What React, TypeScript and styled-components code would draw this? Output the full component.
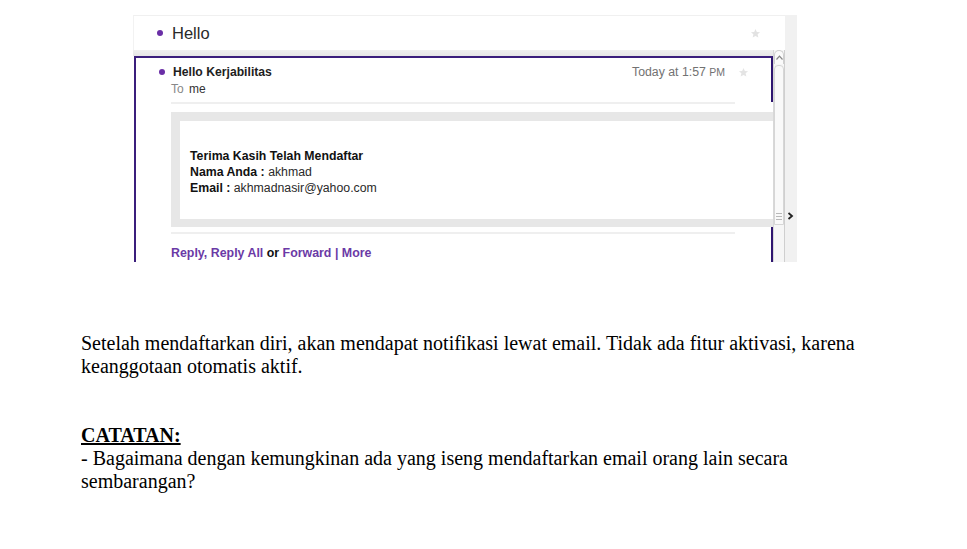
import React from "react";
import styled, { createGlobalStyle } from "styled-components";

const Global = createGlobalStyle`
  html, body { margin: 0; padding: 0; background: #fff; }
  body { font-family: "Liberation Sans", Arial, sans-serif; }
`;

const Page = styled.div`
  width: 967px;
  height: 549px;
  padding-top: 15px;
  box-sizing: border-box;
  overflow: hidden;
`;

const Shot = styled.div`
  margin-left: 133px;
  width: 664px;
  height: 247px;
  display: flex;
  overflow: hidden;
`;

const LeftPane = styled.div`
  width: 652px;
  display: flex;
  flex-direction: column;
`;

const Header = styled.div`
  height: 35px;
  flex: none;
  box-sizing: border-box;
  border-top: 1px solid #f0f0f0;
  border-left: 1px solid #f2f2f2;
  background: #fff;
  display: flex;
  align-items: center;
  padding: 0 24px 0 23px;
`;

const Dot = styled.span<{ $size: number }>`
  width: ${(p) => p.$size}px;
  height: ${(p) => p.$size}px;
  border-radius: 50%;
  background: #6a2ea6;
  flex: none;
`;

const HeaderTitle = styled.span`
  margin-left: 9px;
  font-size: 16.5px;
  color: #2a2a2a;
`;

const Spacer = styled.span`
  flex: 1;
`;

const Row = styled.div`
  flex: 1;
  display: flex;
  min-height: 0;
`;

const ContentCol = styled.div`
  width: 640px;
  display: flex;
  flex-direction: column;
`;

const Band = styled.div`
  height: 6px;
  flex: none;
  background: linear-gradient(#efefef, #e6e6e6);
`;

const Card = styled.div`
  flex: 1;
  margin-left: 1px;
  border: 2px solid #3b1e7c;
  border-bottom: none;
  border-right-color: #2f1670;
  padding: 6px 22px 0 0;
  background: #fff;
`;

const TitleRow = styled.div`
  height: 16px;
  display: flex;
  align-items: center;
`;

const CardDot = styled(Dot)`
  margin-left: 23px;
`;

const Title = styled.span`
  margin-left: 8px;
  font-size: 12.2px;
  font-weight: bold;
  color: #1e1e1e;
`;

const Time = styled.span`
  font-size: 12.3px;
  color: #727272;
  small {
    font-size: 10.5px;
  }
`;

const StarWrap = styled.span<{ $gap: number }>`
  margin-left: ${(p) => p.$gap}px;
  display: flex;
  align-items: center;
`;

const ToRow = styled.div`
  margin: 1px 0 0 35px;
  height: 16px;
  line-height: 16px;
  font-size: 12px;
  color: #888;
  b {
    font-weight: normal;
    color: #333;
    margin-left: 2px;
  }
`;

const MessageArea = styled.div`
  margin: 5px -24px 0 35px;
  background: #fff;
`;

const Rule = styled.div<{ $right: number }>`
  height: 2px;
  background: #efefef;
  margin-right: ${(p) => p.$right}px;
`;

const GrayBox = styled.div`
  margin-top: 8px;
  border: 9px solid #e7e7e7;
  border-bottom-width: 8px;
  border-right: none;
  background: #fff;
  padding: 27px 10px 23px 10px;
`;

const Line = styled.div`
  font-size: 12.3px;
  line-height: 16px;
  color: #2a2a2a;
  b {
    color: #111;
  }
`;

const BottomRule = styled(Rule)`
  margin-top: 5px;
  margin-left: 35px;
`;

const Actions = styled.div`
  margin: 11px 0 0 35px;
  font-size: 12.4px;
  line-height: 16px;
  font-weight: bold;
  color: #111;
`;

const Link = styled.span`
  color: #6b3aa6;
`;

const Scrollbar = styled.div`
  width: 12px;
  box-sizing: border-box;
  border-left: 1px solid #d8d8d8;
  border-right: 1px solid #cfcfcf;
  background: #f6f6f6;
  display: flex;
  flex-direction: column;
`;

const ArrowBtn = styled.div`
  height: 13px;
  border-radius: 5px 5px 0 0;
  border: 1px solid #cfcfcf;
  border-bottom: none;
  display: flex;
  align-items: center;
  justify-content: center;
  background: #fafafa;
`;

const Thumb = styled.div`
  height: 160px;
  margin-top: 1px;
  border-radius: 4px 4px 0 0;
  border: 1px solid #d6d6d6;
  background: #f9f9f9;
  display: flex;
  flex-direction: column;
  justify-content: flex-end;
  align-items: center;
  padding-bottom: 4px;
  box-sizing: border-box;
`;

const Grip = styled.div`
  width: 6px;
  height: 1px;
  background: #b8b8b8;
  margin-top: 2px;
`;

const Side = styled.div`
  width: 12px;
  background: #f1f1f1;
  padding-top: 197px;
  box-sizing: border-box;
  display: flex;
  justify-content: flex-start;
  padding-left: 2px;
`;

const Doc = styled.div`
  margin: 70px 0 0 81px;
  width: 795px;
  font-family: "Liberation Serif", "Times New Roman", serif;
  font-size: 20px;
  line-height: 23px;
  color: #000;
`;

const Para = styled.p`
  margin: 0;
`;

const Note = styled.div`
  margin-top: 46px;
`;

const NoteHead = styled.div`
  font-weight: bold;
  text-decoration: underline;
`;

const Star = ({ color, size }: { color: string; size: number }) => (
  <svg width={size} height={size} viewBox="0 0 24 24">
    <path
      d="M12 2l2.9 6.6 7.1.6-5.4 4.7 1.6 7-6.2-3.7-6.2 3.7 1.6-7L2 9.2l7.1-.6z"
      fill={color}
    />
  </svg>
);

export default function App() {
  return (
    <>
      <Global />
      <Page>
        <Shot>
          <LeftPane>
            <Header>
              <Dot $size={6} />
              <HeaderTitle>Hello</HeaderTitle>
              <Spacer />
              <Star color="#e2e2e2" size={11} />
            </Header>
            <Row>
              <ContentCol>
                <Band />
                <Card>
                  <TitleRow>
                    <CardDot $size={6} />
                    <Title>Hello Kerjabilitas</Title>
                    <Spacer />
                    <Time>
                      Today at 1:57 <small>PM</small>
                    </Time>
                    <StarWrap $gap={13}>
                      <Star color="#e4e4e4" size={11} />
                    </StarWrap>
                  </TitleRow>
                  <ToRow>
                    To <b>me</b>
                  </ToRow>
                  <MessageArea>
                    <Rule $right={38} />
                    <GrayBox>
                      <Line>
                        <b>Terima Kasih Telah Mendaftar</b>
                      </Line>
                      <Line>
                        <b>Nama Anda :</b> akhmad
                      </Line>
                      <Line>
                        <b>Email :</b> akhmadnasir@yahoo.com
                      </Line>
                    </GrayBox>
                  </MessageArea>
                  <BottomRule $right={14} />
                  <Actions>
                    <Link>Reply</Link>
                    <Link>, </Link>
                    <Link>Reply All</Link> or <Link>Forward</Link>{" "}
                    <Link>|</Link> <Link>More</Link>
                  </Actions>
                </Card>
              </ContentCol>
              <Scrollbar>
                <ArrowBtn>
                  <svg width="7" height="5" viewBox="0 0 7 5">
                    <path d="M0.5 4.5L3.5 1.2L6.5 4.5" stroke="#888" strokeWidth="1.2" fill="none" />
                  </svg>
                </ArrowBtn>
                <Thumb>
                  <Grip />
                  <Grip />
                  <Grip />
                </Thumb>
              </Scrollbar>
            </Row>
          </LeftPane>
          <Side>
            <svg width="7" height="8" viewBox="0 0 7 8">
              <path d="M1.5 1L5 4L1.5 7" stroke="#222" strokeWidth="1.8" fill="none" />
            </svg>
          </Side>
        </Shot>
        <Doc>
          <Para>
            Setelah mendaftarkan diri, akan mendapat notifikasi lewat email. Tidak ada fitur
            aktivasi, karena keanggotaan otomatis aktif.
          </Para>
          <Note>
            <NoteHead>CATATAN:</NoteHead>
            <Para>
              - Bagaimana dengan kemungkinan ada yang iseng mendaftarkan email orang lain secara
              sembarangan?
            </Para>
          </Note>
        </Doc>
      </Page>
    </>
  );
}
